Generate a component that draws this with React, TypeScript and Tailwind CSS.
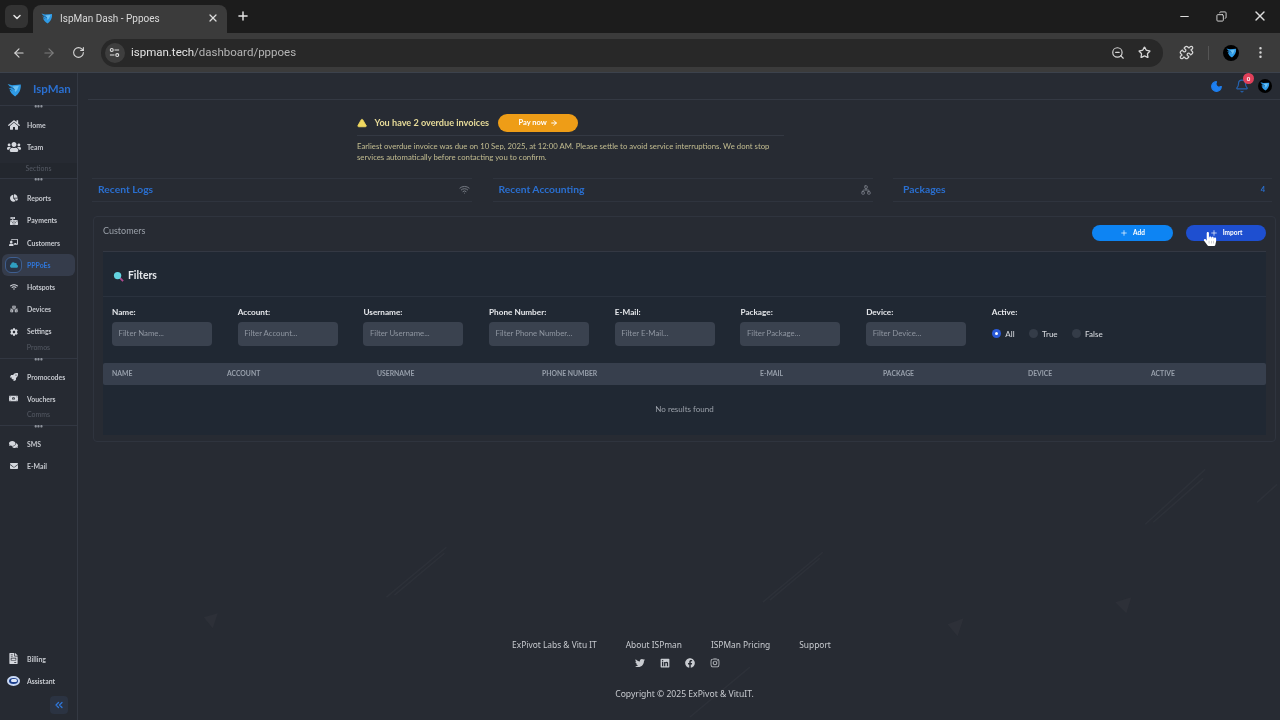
import React from "react";
import { ArrowLeft, ArrowRight, RotateCw, ZoomOut, Star, Puzzle, MoreVertical, Minus, X, Plus, ChevronDown, Copy, ChevronsLeft, Wifi, Network, Moon, Bell, TriangleAlert } from "lucide-react";
import { FaHome, FaUsers, FaChartPie, FaCashRegister, FaChalkboardTeacher, FaCloud, FaWifi, FaNetworkWired, FaCog, FaRocket, FaMoneyBillAlt, FaComments, FaEnvelope, FaFileInvoice, FaTwitter, FaLinkedin, FaFacebook, FaInstagram, FaHandPointer } from "react-icons/fa";

const Logo = ({ className }: { className: string }) => (
  <svg viewBox="0 0 24 24" className={className}>
    <path d="M1 3l7 2 14-1c1 8-3 15-9 19C8 20 5 16 4 12l5 2-7-5 5 1z" fill="#2f9be6" />
    <path d="M9 7l10-1-3 7-3 3-1-5z" fill="#6cc0f2" />
    <path d="M5 7l7 5" stroke="#123a66" strokeWidth="1" />
  </svg>
);

const Item = ({ icon, label, active }: { icon: React.ReactNode; label: string; active?: boolean }) => (
  <div className={`flex h-[22.2px] items-center ${active ? "mx-0.5 rounded-md bg-[#353c4b]" : ""}`}>
    <div className={`flex w-[27px] justify-center text-[#d5d8de] ${active ? "-ml-0.5" : ""}`}>{icon}</div>
    <span className={`text-[6.9px] font-bold ${active ? "text-[#2f76d8]" : "text-[#c6c9cf]"}`}>{label}</span>
  </div>
);

const Dots = () => <div className="-mt-[2px] mb-[4px] h-[6px] text-center text-[5px] font-bold leading-[5px] text-[#8d929b]">•••</div>;

const Section = ({ label, first }: { label: string; first?: boolean }) => (
  <>
    <div className={`h-[16px] border-b border-[#323742] text-center text-[7px] leading-[8px] text-[#555a64] ${first ? "mt-[5px] bg-[#23272e] pt-[1px]" : "-mb-[1px]"}`}>{label}</div>
    {first ? <Dots /> : <div className="-mt-[1px] mb-[3px] h-[6px] text-center text-[5px] font-bold leading-[5px] text-[#8d929b]">•••</div>}
  </>
);

const Card = ({ title, right, className }: { title: string; right: React.ReactNode; className: string }) => (
  <div className={`flex h-[24px] items-center justify-between border-y border-[#2f343e] ${className}`}>
    <span className="text-[10.3px] font-bold text-[#2a6fd0]">{title}</span>
    {right}
  </div>
);

const filters = [["Name:", "Filter Name..."], ["Account:", "Filter Account..."], ["Username:", "Filter Username..."], ["Phone Number:", "Filter Phone Number..."], ["E-Mail:", "Filter E-Mail..."], ["Package:", "Filter Package..."], ["Device:", "Filter Device..."]];
const cols = ["NAME", "ACCOUNT", "USERNAME", "PHONE NUMBER", "E-MAIL", "PACKAGE", "DEVICE", "ACTIVE"];

export default function App() {
  return (
    <div className="flex h-[720px] w-[1280px] flex-col overflow-hidden bg-[#272b33] blur-[0.3px] [font-family:Lato,sans-serif]">
      {/* tab strip */}
      <div className="flex h-[33px] shrink-0 items-end bg-[#1c1c1c] pl-[5px] [font-family:Roboto,sans-serif]">
        <div className="mb-[5px] flex h-[23px] w-[23px] items-center justify-center rounded-md bg-[#333333] text-[#e3e3e3]"><ChevronDown size={12} strokeWidth={3} /></div>
        <div className="ml-[5px] flex h-[28px] w-[194px] items-center rounded-t-lg bg-[#3b3b3b] pb-[2px] pl-[8px] pr-[8px]">
          <Logo className="h-[12px] w-[12px]" />
          <span className="ml-[7px] flex-1 text-[10px] text-[#dadada]">IspMan Dash - Pppoes</span>
          <X size={12} strokeWidth={2.5} className="text-[#dcdcdc]" />
        </div>
        <Plus size={14} strokeWidth={2.5} className="mb-[10px] ml-[9px] text-[#e3e3e3]" />
        <div className="mb-[9px] ml-auto flex items-center gap-[24px] pr-[12px] text-[#dddddd]">
          <Minus size={13} className="-translate-x-[2px]" />
          <Copy size={11} className="-translate-x-[1px] -scale-x-100" />
          <X size={16} />
        </div>
      </div>
      {/* toolbar */}
      <div className="flex h-[39px] shrink-0 items-center bg-[#3b3b3b] pl-[12px] pr-[12px] [font-family:Roboto,sans-serif]">
        <ArrowLeft size={14} className="text-[#d6d6d6]" />
        <ArrowRight size={14} className="ml-[16px] text-[#7d7d7d]" />
        <RotateCw size={13} className="ml-[16px] text-[#d6d6d6]" />
        <div className="ml-[16px] flex h-[28px] w-[1063px] items-center rounded-full bg-[#282828] pl-[4px] pr-[12px]">
          <div className="flex h-[20px] w-[20px] items-center justify-center rounded-full bg-[#3e3e3e]">
            <svg viewBox="0 0 12 12" className="h-[11px] w-[11px]" fill="none" stroke="#e0e0e0" strokeWidth="1.2">
              <circle cx="3" cy="3.2" r="1.6" /><path d="M6 3.2h5M1 8.8h5" /><circle cx="9" cy="8.8" r="1.6" />
            </svg>
          </div>
          <span className="ml-[6px] text-[11.5px] text-[#e3e3e3]">ispman.tech<span className="text-[#b5b5b5]">/dashboard/pppoes</span></span>
          <ZoomOut size={14} className="ml-auto text-[#d6d6d6]" />
          <Star size={13} className="ml-[13px] text-[#d6d6d6]" strokeWidth={2.4} />
        </div>
        <Puzzle size={15} className="ml-[16px] text-[#d6d6d6]" />
        <div className="ml-[14px] h-[14px] w-px bg-[#555555]" />
        <div className="ml-[14px] flex h-[16px] w-[16px] items-center justify-center rounded-full bg-black"><Logo className="h-[11px] w-[11px]" /></div>
        <MoreVertical size={15} className="ml-[14px] text-[#d6d6d6]" />
      </div>
      {/* page */}
      <div className="flex min-h-0 flex-1 border-t border-[#3c424c]">
        <aside className="flex w-[78px] shrink-0 flex-col border-r border-[#343943] bg-[#262a32]">
          <div className="flex h-[33px] shrink-0 items-center border-b border-[#323742] pl-[7px]">
            <Logo className="h-[15px] w-[15px]" />
            <span className="ml-[11px] text-[11.5px] font-bold text-[#2a6fd0]">IspMan</span>
          </div>
          <Dots />
          <Item icon={<FaHome size={12} />} label="Home" />
          <Item icon={<FaUsers size={14} />} label="Team" />
          <Section first label="Sections" />
          <Item icon={<FaChartPie size={8} />} label="Reports" />
          <Item icon={<FaCashRegister size={8} />} label="Payments" />
          <Item icon={<FaChalkboardTeacher size={9} />} label="Customers" />
          <Item active icon={<span className="flex h-[16px] w-[17px] items-center justify-center rounded-md border border-[#3f5f90] bg-[#2a3446]"><FaCloud size={8} className="text-[#2f9fc0]" /></span>} label="PPPoEs" />
          <Item icon={<FaWifi size={8} />} label="Hotspots" />
          <Item icon={<FaNetworkWired size={8} />} label="Devices" />
          <Item icon={<FaCog size={8} />} label="Settings" />
          <Section label="Promos" />
          <Item icon={<FaRocket size={8} />} label="Promocodes" />
          <Item icon={<FaMoneyBillAlt size={9} />} label="Vouchers" />
          <Section label="Comms" />
          <Item icon={<FaComments size={9} />} label="SMS" />
          <Item icon={<FaEnvelope size={8} />} label="E-Mail" />
          <div className="mt-auto" />
          <Item icon={<FaFileInvoice size={11} />} label="Billing" />
          <Item icon={<span className="flex h-[10px] w-[13px] items-center justify-center rounded-[50%] border-2 border-[#c9d9f5] bg-[#1c3f8c]"><span className="h-[3px] w-[6px] rounded-full bg-[#dfe8f8]" /></span>} label="Assistant" />
          <div className="flex h-[28px] items-start justify-end pr-[9px] pt-[4px]">
            <div className="flex h-[18px] w-[18px] items-center justify-center rounded bg-[#2b3342] text-[#2f76d8]"><ChevronsLeft size={12} strokeWidth={2.5} /></div>
          </div>
        </aside>

        <main className="relative flex min-w-0 flex-1 flex-col">
          <svg className="absolute inset-0 h-full w-full" viewBox="0 0 1202 648" fill="none">
            <g stroke="#2d3139" strokeWidth="1.5">
              <path d="M308 525l60-50M316 523l50-42M685 530l60-50M692 528l50-42M1068 452l60-55M1076 450l50-44M612 645l60-50M1180 430l20-18" />
            </g>
            <g fill="#2d3038">
              <path d="M125 545l14 -4-5 15zM870 552l16-6-6 18zM1038 530l16-5-5 16z" />
            </g>
          </svg>
          <div className="relative ml-[10px] flex h-[27px] shrink-0 items-center justify-end border-b border-[#343943] pr-[8px]">
            <Moon size={13} fill="#1d7ff0" className="text-[#1d7ff0]" />
            <div className="relative ml-[12px]">
              <Bell size={14} className="text-[#2563b0]" />
              <span className="absolute -right-[5px] -top-[6px] flex h-[11px] w-[11px] items-center justify-center rounded-full bg-[#e0405a] text-[6px] font-bold text-white">0</span>
            </div>
            <div className="ml-[9px] flex h-[14px] w-[14px] items-center justify-center rounded-full bg-black"><Logo className="h-[10px] w-[10px]" /></div>
          </div>

          <div className="relative ml-[279px] mt-[13px] w-[427px]">
            <div className="flex h-[19px] items-center">
              <TriangleAlert size={10} fill="#f0d860" className="text-[#f0d860]" />
              <span className="ml-[7.5px] text-[9.15px] font-bold text-[#e8dc9a]">You have 2 overdue invoices</span>
              <div className="ml-[9px] flex h-[18px] w-[80px] items-center justify-center gap-[3px] rounded-full bg-[#ee9d17] text-[7.5px] font-bold text-white">Pay now <ArrowRight size={8} strokeWidth={3} /></div>
            </div>
            <div className="mt-[3px] h-[28.5px] border-t border-[#343943] pt-[5px] text-[7.75px] leading-[11px] text-[#c3bd91]">
              Earliest overdue invoice was due on 10 Sep, 2025, at 12:00 AM. Please settle to avoid service interruptions. We dont stop services automatically before contacting you to confirm.
            </div>
          </div>

          <div className="relative ml-[14px] mt-[14px] flex w-[1180px] justify-between">
            <Card className="w-[380px] pl-[6px] pr-[2px]" title="Recent Logs" right={<Wifi size={11} className="text-[#7c818a]" />} />
            <Card className="w-[380px] pl-[6px] pr-[2px]" title="Recent Accounting" right={<Network size={10} className="text-[#7c818a]" />} />
            <Card className="w-[379px] pl-[10px] pr-[7px]" title="Packages" right={<span className="text-[7.5px] font-bold text-[#2a6fd0]">4</span>} />
          </div>

          <section className="relative ml-[15px] mr-[4px] mt-[14px] h-[226px] rounded border border-[#2f343e] bg-[#272b33] px-[9px]">
            <div className="flex h-[35px] items-center border-b border-[#333843] pb-[2px]">
              <span className="pb-[3px] text-[9px] text-[#9aa0a9]">Customers</span>
              <div className="ml-auto flex h-[16px] w-[81px] items-center justify-center gap-[5px] rounded-full bg-[#0d84f3] text-[6.5px] font-bold text-white"><Plus size={8} />Add</div>
              <div className="ml-[13px] flex h-[16px] w-[80px] items-center justify-center gap-[5px] rounded-full bg-[#1e4fd0] text-[6.5px] font-bold text-white"><Plus size={8} />Import</div>
            </div>
            <div className="absolute left-[1109px] top-[15px] z-10 text-white"><FaHandPointer size={14} /></div>
            <div className="h-[183px] bg-[#202833]">
              <div className="flex h-[45px] items-center border-b border-[#2a323e] pl-[10px] pt-[5px]">
                <svg viewBox="0 0 12 12" className="h-[11px] w-[11px]"><path d="M7 7l4 4" stroke="#b04a90" strokeWidth="2" /><circle cx="5" cy="5" r="4" fill="#63d4e0" /></svg>
                <span className="ml-[4px] text-[10.4px] font-bold text-[#e6e8ec]">Filters</span>
              </div>
              <div className="flex h-[66px] pl-[9px] pt-[9px]">
                {filters.map(([l, p]) => (
                  <div key={l} className="w-[125.7px] shrink-0">
                    <div className="h-[16px] text-[8.2px] font-bold leading-[12px] text-[#e6e8ec]">{l}</div>
                    <div className="flex h-[24px] w-[100px] items-center rounded-[4px] bg-[#3a424f] pl-[6.5px] text-[7.8px] text-[#8f96a1]">{p}</div>
                  </div>
                ))}
                <div>
                  <div className="h-[16px] text-[8.2px] font-bold leading-[12px] text-[#e6e8ec]">Active:</div>
                  <div className="flex h-[24px] items-center text-[8px] font-medium text-[#d4d7dc]">
                    <span className="flex h-[9px] w-[9px] items-center justify-center rounded-full bg-[#2a5ad8]"><span className="h-[3px] w-[3px] rounded-full bg-white" /></span>
                    <span className="ml-[4.5px]">All</span>
                    <span className="ml-[14px] h-[9px] w-[9px] rounded-full bg-[#343c48]" />
                    <span className="ml-[4.5px]">True</span>
                    <span className="ml-[14px] h-[9px] w-[9px] rounded-full bg-[#343c48]" />
                    <span className="ml-[4.5px]">False</span>
                  </div>
                </div>
              </div>
              <div className="grid h-[22px] grid-cols-[115px_150px_165px_218px_123px_145px_123px_1fr] items-center rounded-[2px] bg-[#373f4d] pl-[9px] text-[6.8px] font-bold text-[#98a0ac]">
                {cols.map((c) => <span key={c}>{c}</span>)}
              </div>
              <div className="flex h-[48px] items-center justify-center text-[8px] text-[#9aa0a9]">No results found</div>
            </div>
          </section>

          <footer className="relative mt-auto flex h-[84px] flex-col items-center text-[#c8cbd0] [font-family:'Noto_Sans',sans-serif]">
            <div className="flex h-[18px] items-center gap-[29px] pr-[15px] text-[8.4px]">
              <span>ExPivot Labs &amp; Vitu IT</span><span>About ISPman</span><span>ISPMan Pricing</span><span>Support</span>
            </div>
            <div className="mt-[2px] flex h-[14px] items-center gap-[15px] pr-[3px]">
              <FaTwitter size={10} /><FaLinkedin size={10} /><FaFacebook size={10} /><FaInstagram size={10} />
            </div>
            <div className="ml-[11px] mt-[18px] text-[8.6px]">Copyright © 2025 ExPivot &amp; VituIT.</div>
          </footer>
        </main>
      </div>
    </div>
  );
}
